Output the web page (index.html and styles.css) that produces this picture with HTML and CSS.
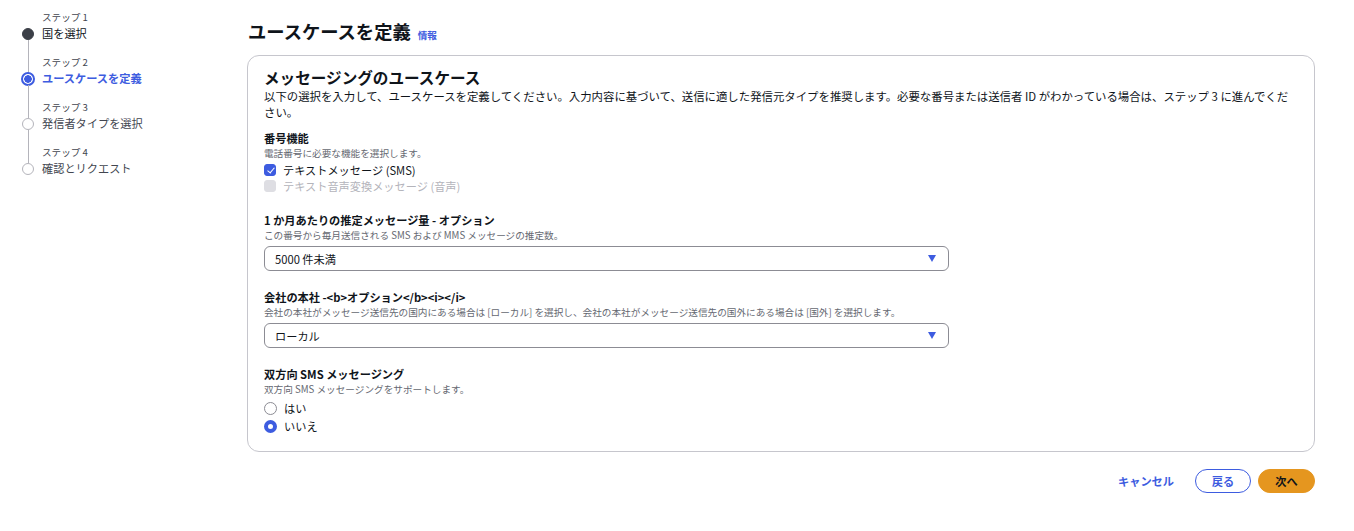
FILE: index.html
```html
<!DOCTYPE html>
<html lang="ja">
  <head>
    <meta charset="UTF-8" />
    <meta name="viewport" content="width=device-width, initial-scale=1.0" />
    <title>ユースケースを定義</title>
    <link rel="stylesheet" href="styles.css">
  </head>
  <body>
    <div class="layout">
      <nav class="steps">
        <div class="step done">
          <div class="rail"><span class="seg top blank"></span><span class="dot"></span><span class="seg"></span></div>
          <div class="step-text">
            <div class="step-num">ステップ 1</div>
            <div class="step-name">国を選択</div>
          </div>
        </div>
        <div class="step current">
          <div class="rail"><span class="seg top"></span><span class="dot"></span><span class="seg"></span></div>
          <div class="step-text">
            <div class="step-num">ステップ 2</div>
            <div class="step-name">ユースケースを定義</div>
          </div>
        </div>
        <div class="step">
          <div class="rail"><span class="seg top"></span><span class="dot"></span><span class="seg"></span></div>
          <div class="step-text">
            <div class="step-num">ステップ 3</div>
            <div class="step-name">発信者タイプを選択</div>
          </div>
        </div>
        <div class="step">
          <div class="rail"><span class="seg top"></span><span class="dot"></span><span class="seg blank"></span></div>
          <div class="step-text">
            <div class="step-num">ステップ 4</div>
            <div class="step-name">確認とリクエスト</div>
          </div>
        </div>
      </nav>

      <main class="main">
        <div class="page-header">
          <h1 class="page-title">ユースケースを定義</h1>
          <a class="info-link" href="#">情報</a>
        </div>

        <section class="card">
          <h2 class="card-title">メッセージングのユースケース</h2>
          <p class="card-desc">以下の選択を入力して、ユースケースを定義してください。入力内容に基づいて、送信に適した発信元タイプを推奨します。必要な番号または送信者 ID がわかっている場合は、ステップ 3 に進んでください。</p>

          <div class="field">
            <div class="field-label">番号機能</div>
            <div class="field-hint">電話番号に必要な機能を選択します。</div>
            <div class="options">
              <label class="option"><span class="checkbox checked"></span>テキストメッセージ (SMS)</label>
              <label class="option disabled"><span class="checkbox"></span>テキスト音声変換メッセージ (音声)</label>
            </div>
          </div>

          <div class="field">
            <div class="field-label">1 か月あたりの推定メッセージ量 - オプション</div>
            <div class="field-hint">この番号から毎月送信される SMS および MMS メッセージの推定数。</div>
            <div class="select"><span>5000 件未満</span><span class="caret"></span></div>
          </div>

          <div class="field">
            <div class="field-label">会社の本社 -&lt;b&gt;オプション&lt;/b&gt;&lt;i&gt;&lt;/i&gt;</div>
            <div class="field-hint">会社の本社がメッセージ送信先の国内にある場合は [ローカル] を選択し、会社の本社がメッセージ送信先の国外にある場合は [国外] を選択します。</div>
            <div class="select"><span>ローカル</span><span class="caret"></span></div>
          </div>

          <div class="field">
            <div class="field-label">双方向 SMS メッセージング</div>
            <div class="field-hint">双方向 SMS メッセージングをサポートします。</div>
            <div class="options radios">
              <label class="option"><span class="radio"></span>はい</label>
              <label class="option"><span class="radio checked"></span>いいえ</label>
            </div>
          </div>
        </section>

        <div class="actions">
          <button class="btn link">キャンセル</button>
          <button class="btn normal">戻る</button>
          <button class="btn primary">次へ</button>
        </div>
      </main>
    </div>
  </body>
</html>
```

FILE: styles.css
```css
* {
  margin: 0;
  padding: 0;
  box-sizing: border-box;
}

body {
  background: #ffffff;
  font-family: "Noto Sans CJK JP", "Noto Sans", sans-serif;
  font-size: 11.2px;
  color: #0f141a;
}

.layout {
  display: grid;
  grid-template-columns: 225px 1068px;
  padding: 10px 0 0 22px;
}

/* wizard steps */

.steps {
  display: flex;
  flex-direction: column;
}

.step {
  display: flex;
  gap: 8px;
}

.rail {
  width: 12px;
  display: flex;
  flex-direction: column;
  align-items: center;
}

.seg {
  width: 1px;
  background: #b4b4bb;
}

.seg.top {
  height: 18px;
}

.seg:not(.top) {
  height: 15px;
}

.seg.blank {
  background: transparent;
}

.dot {
  width: 12px;
  height: 12px;
  border-radius: 50%;
  border: 1.5px solid #b4b4bb;
  background: #fff;
  flex-shrink: 0;
}

.step.done .dot {
  background: #3b3f47;
  border-color: #3b3f47;
}

.step.current .dot {
  width: 14px;
  height: 14px;
  margin: -1px 0;
  border: 2px solid #3d5ce0;
  background: radial-gradient(circle, #3d5ce0 0 3.5px, #fff 4px);
}

.step-text {
  padding-bottom: 13px;
}

.step-num {
  font-size: 9.6px;
  line-height: 14px;
  color: #424650;
}

.step-name {
  font-size: 11.2px;
  line-height: 18px;
  color: #424650;
}

.step.done .step-name {
  color: #0f141a;
}

.step.current .step-name {
  color: #3d5ce0;
  font-weight: 700;
}

/* main */

.main {
  display: flex;
  flex-direction: column;
}

.page-header {
  display: flex;
  align-items: baseline;
  gap: 7px;
  padding: 7px 0 0 1px;
}

.page-title {
  font-size: 18.3px;
  line-height: 28px;
  font-weight: 700;
}

.info-link {
  font-size: 9.6px;
  font-weight: 700;
  color: #3d5ce0;
  text-decoration: none;
}

.card {
  margin-top: 10px;
  border: 1px solid #c6c6cd;
  border-radius: 12px;
  padding: 10px 16px 16px;
  display: flex;
  flex-direction: column;
  gap: 19px;
}

.card-title {
  font-size: 15.6px;
  line-height: 22px;
  font-weight: 700;
}

.card-desc {
  font-size: 11.4px;
  line-height: 16px;
  margin-top: -19px;
  margin-bottom: -8px;
}

.field {
  display: flex;
  flex-direction: column;
}

.field-label {
  line-height: 15px;
  font-weight: 700;
}

.field-hint {
  font-size: 9.65px;
  line-height: 14px;
  color: #656871;
}

.options {
  display: flex;
  flex-direction: column;
  margin-top: 2px;
}

.option {
  display: flex;
  align-items: center;
  gap: 7px;
  line-height: 16px;
}

.radios {
  margin-top: 3px;
}

.radios .option {
  line-height: 18px;
}

.option.disabled {
  color: #b4b4bb;
}

.checkbox {
  width: 12px;
  height: 12px;
  border-radius: 3px;
  border: 1px solid #8c8c94;
  background: #fff;
}

.checkbox.checked {
  background: #3d5ce0;
  border-color: #3d5ce0;
  position: relative;
}

.checkbox.checked::after {
  content: "";
  position: absolute;
  left: 3.5px;
  top: 1px;
  width: 3px;
  height: 6px;
  border: solid #fff;
  border-width: 0 1.8px 1.8px 0;
  transform: rotate(40deg);
}

.option.disabled .checkbox {
  background: #dedee3;
  border-color: #dedee3;
}

.radio {
  width: 13px;
  height: 13px;
  border-radius: 50%;
  border: 1.5px solid #8c8c94;
  background: #fff;
}

.radio.checked {
  border: 4px solid #3d5ce0;
}

.select {
  margin-top: 4px;
  width: 685px;
  height: 25px;
  border: 1px solid #8c8c94;
  border-radius: 6px;
  display: flex;
  align-items: center;
  justify-content: space-between;
  padding: 0 12px 0 10px;
}

.caret {
  width: 0;
  height: 0;
  border-left: 4.5px solid transparent;
  border-right: 4.5px solid transparent;
  border-top: 7px solid #3d5ce0;
}

.actions {
  display: flex;
  justify-content: flex-end;
  align-items: center;
  gap: 7px;
  margin-top: 17px;
}

.btn {
  font-family: inherit;
  font-size: 11.2px;
  font-weight: 700;
  height: 24px;
  border-radius: 12px;
  padding: 0;
  white-space: nowrap;
  cursor: pointer;
  background: #fff;
  border: 1px solid transparent;
}

.btn.link {
  color: #3d5ce0;
  padding: 0 16px;
  margin-right: -3px;
}

.btn.normal {
  border-color: #3d5ce0;
  color: #3d5ce0;
  width: 56px;
}

.btn.primary {
  background: #e5961f;
  border-color: #e5961f;
  color: #0f141a;
  width: 57px;
}
```
